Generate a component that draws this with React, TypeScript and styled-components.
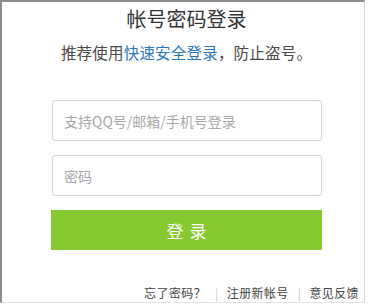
import React from "react";
import styled, { createGlobalStyle } from "styled-components";

const Global = createGlobalStyle`
  html, body { margin: 0; padding: 0; background: #fff; }
  body { font-family: "Noto Sans CJK SC", "Liberation Sans", sans-serif; }
`;

const Frame = styled.div`
  box-sizing: border-box;
  width: 365px;
  height: 303px;
  padding-left: 7px;
  border-top: 2px solid #8c8c8c;
  border-left: 2px solid #8c8c8c;
  border-right: 1px solid #d6d6d6;
  border-bottom: 1px solid #e4e4e4;
  display: flex;
  flex-direction: column;
  align-items: center;
  position: relative;
`;

const Title = styled.h1`
  margin: 4px 0 0;
  font-size: 20px;
  font-weight: 400;
  line-height: 26px;
  color: #333;
`;

const Subtitle = styled.p`
  margin: 10px 0 0;
  font-size: 15.5px;
  letter-spacing: 0.2px;
  line-height: 20px;
  color: #4a4a4a;
`;

const Link = styled.a`
  color: #2b78bd;
  text-decoration: none;
`;

const Form = styled.div`
  margin-top: 38px;
  width: 271px;
  display: flex;
  flex-direction: column;
  gap: 14px;
`;

const Input = styled.input`
  box-sizing: border-box;
  width: 270px;
  height: 41px;
  margin-left: 1px;
  border: 1px solid #d3d3d3;
  border-radius: 3px;
  padding: 0 11px;
  font-family: inherit;
  font-size: 14px;
  color: #333;
  outline: none;
  &::placeholder { color: #a9a9a9; }
`;

const Button = styled.button`
  width: 271px;
  height: 40px;
  border: none;
  background: #86c930;
  color: #fff;
  font-family: inherit;
  font-size: 17px;
  letter-spacing: 6px;
  text-indent: 6px;
  cursor: pointer;
`;

const Footer = styled.div`
  position: absolute;
  right: 5px;
  bottom: 1px;
  display: flex;
  align-items: center;
  font-size: 12px;
  letter-spacing: 0.4px;
  line-height: 16px;
  color: #444;
`;

const FooterLink = styled.a`
  color: #444;
  text-decoration: none;
`;

const Sep = styled.span`
  color: #c8c8c8;
  margin: 0 8px 0 9px;
`;

export default function App() {
  return (
    <>
      <Global />
      <Frame>
        <Title>帐号密码登录</Title>
        <Subtitle>
          推荐使用<Link href="#">快速安全登录</Link>，防止盗号。
        </Subtitle>
        <Form>
          <Input placeholder="支持QQ号/邮箱/手机号登录" />
          <Input type="password" placeholder="密码" />
          <Button>登录</Button>
        </Form>
        <Footer>
          <FooterLink href="#">忘了密码？</FooterLink>
          <Sep>|</Sep>
          <FooterLink href="#">注册新帐号</FooterLink>
          <Sep>|</Sep>
          <FooterLink href="#">意见反馈</FooterLink>
        </Footer>
      </Frame>
    </>
  );
}
